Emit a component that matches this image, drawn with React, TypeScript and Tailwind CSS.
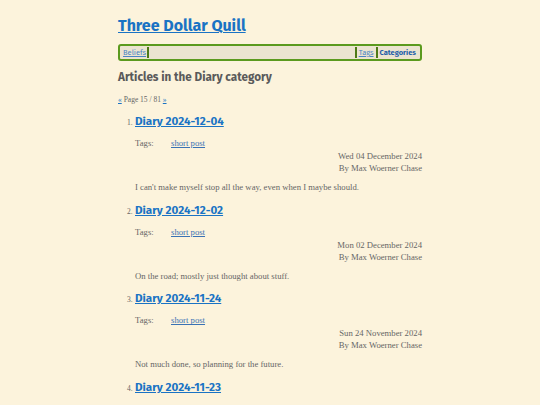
const posts = [
  { n: 1, title: "Diary 2024-12-04", date: "Wed 04 December 2024", summary: "I can't make myself stop all the way, even when I maybe should." },
  { n: 2, title: "Diary 2024-12-02", date: "Mon 02 December 2024", summary: "On the road; mostly just thought about stuff." },
  { n: 3, title: "Diary 2024-11-24", date: "Sun 24 November 2024", summary: "Not much done, so planning for the future." },
  { n: 4, title: "Diary 2024-11-23", date: "", summary: "" },
];

const sans = "font-['Fira_Sans','Noto_Sans',sans-serif]";
const serif = "font-['Roboto_Slab','Liberation_Serif',serif]";

export default function App() {
  return (
    <div className={`h-[405px] w-full overflow-hidden bg-[#fcf3dc] ${serif} text-[#666]`}>
      <div className="mx-auto w-[304px] pt-[14px]">
        <h1 className={`${sans} text-[16px] font-bold leading-[24px] text-[#1a73c4]`}>
          <a href="#" className="underline">Three Dollar Quill</a>
        </h1>

        <nav className={`${sans} mt-[6px] flex h-[17px] items-center rounded-[3px] border-2 border-[#5b9a1e] bg-[#ebe4d0] px-[2px] text-[7.5px] leading-none`}>
          <a href="#" className="px-[1px] text-[#4a84c4] underline">Beliefs</a>
          <span className="h-[11px] w-[2px] bg-[#4e7a16]" />
          <span className="flex-1" />
          <span className="h-[11px] w-[2px] bg-[#4e7a16]" />
          <a href="#" className="px-[2px] text-[#4a84c4] underline">Tags</a>
          <span className="h-[11px] w-[2px] bg-[#4e7a16]" />
          <a href="#" className="px-[2px] font-bold text-[#1f5fa8]">Categories</a>
        </nav>

        <h2 className={`${sans} mt-[8px] text-[11.7px] font-bold leading-[16px] text-[#5a5a5a]`}>
          Articles in the Diary category
        </h2>

        <p className="mt-[10px] text-[7.5px] leading-[10px]">
          <a href="#" className="text-[#1a73c4] underline">«</a> Page 15 / 81{" "}
          <a href="#" className="text-[#1a73c4] underline">»</a>
        </p>

        <ol className="mt-[7px] pl-[17px]">
          {posts.map((p) => (
            <li key={p.n} className="flex h-[88.7px] flex-col">
              <div className="flex items-baseline">
                <span className="w-[0px] -translate-x-[8px] text-[7.5px]">{p.n}.</span>
                <a href="#" className={`${sans} text-[11.6px] font-bold leading-[18px] text-[#1a73c4] underline`}>
                  {p.title}
                </a>
              </div>
              {p.date && (
                <>
                  <div className="mt-[7px] flex text-[8.7px] leading-[12px]">
                    <span className="w-[36px]">Tags:</span>
                    <a href="#" className="text-[#3a72b4] underline">short post</a>
                  </div>
                  <div className="mt-[1px] text-right text-[8.7px] leading-[12px]">
                    <div>{p.date}</div>
                    <div>By Max Woerner Chase</div>
                  </div>
                  <p className="mt-[7px] text-[8.7px] leading-[12px]">{p.summary}</p>
                </>
              )}
            </li>
          ))}
        </ol>
      </div>
    </div>
  );
}
